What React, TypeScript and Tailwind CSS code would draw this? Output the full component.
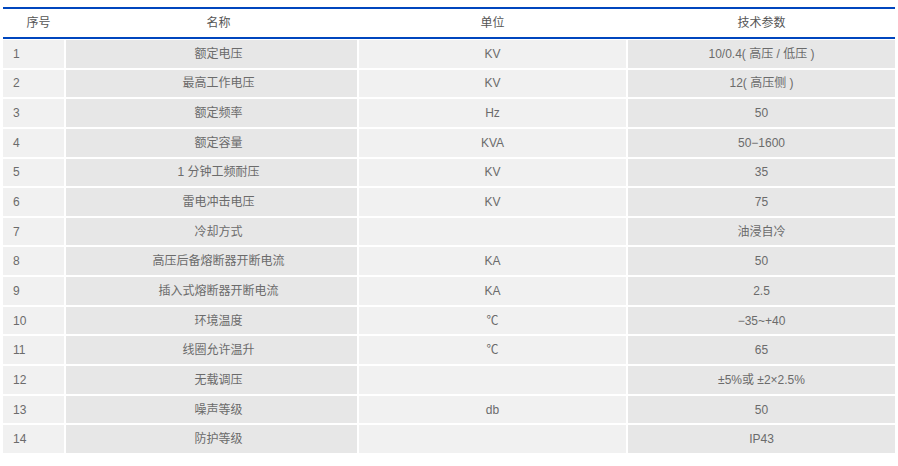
const ROWS: [string, string, string][] = [
  ['额定电压', 'KV', '10/0.4( 高压 / 低压 )'],
  ['最高工作电压', 'KV', '12( 高压侧 )'],
  ['额定频率', 'Hz', '50'],
  ['额定容量', 'KVA', '50−1600'],
  ['1 分钟工频耐压', 'KV', '35'],
  ['雷电冲击电压', 'KV', '75'],
  ['冷却方式', '', '油浸自冷'],
  ['高压后备熔断器开断电流', 'KA', '50'],
  ['插入式熔断器开断电流', 'KA', '2.5'],
  ['环境温度', '℃', '−35~+40'],
  ['线圈允许温升', '℃', '65'],
  ['无载调压', '', '±5%或 ±2×2.5%'],
  ['噪声等级', 'db', '50'],
  ['防护等级', '', 'IP43'],
];

const COLS = 'grid grid-cols-[61px_291px_267px_267px] gap-x-[2px]';

export default function App() {
  return (
    <div
      className="h-[466px] w-[898px] bg-white pl-[3px] pt-[7px] text-[12px] text-[#6b6b6b]"
      style={{ fontFamily: '"Liberation Sans", "Noto Sans CJK SC", sans-serif' }}
    >
      <div className="w-[892px]">
        {/* Header */}
        <div className={`${COLS} h-[32px] border-y-2 border-[#0046be] text-[#555]`}>
          <div className="flex items-center justify-center pl-[10px]">序号</div>
          <div className="flex items-center justify-center pl-[14px]">名称</div>
          <div className="flex items-center justify-center">单位</div>
          <div className="flex items-center justify-center">技术参数</div>
        </div>

        {/* Body */}
        <div className="mt-[1px] flex flex-col gap-y-[2px]">
          {ROWS.map(([name, unit, value], i) => (
            <div key={i} className={`${COLS} h-[27.65px]`}>
              <div className="flex items-center bg-[#f1f1f1] pl-[10px]">{i + 1}</div>
              <div className="flex items-center justify-center bg-[#e7e7e7] pl-[14px]">{name}</div>
              <div className="flex items-center justify-center bg-[#f1f1f1]">{unit}</div>
              <div className="flex items-center justify-center bg-[#e7e7e7]">{value}</div>
            </div>
          ))}
        </div>
      </div>
    </div>
  );
}
